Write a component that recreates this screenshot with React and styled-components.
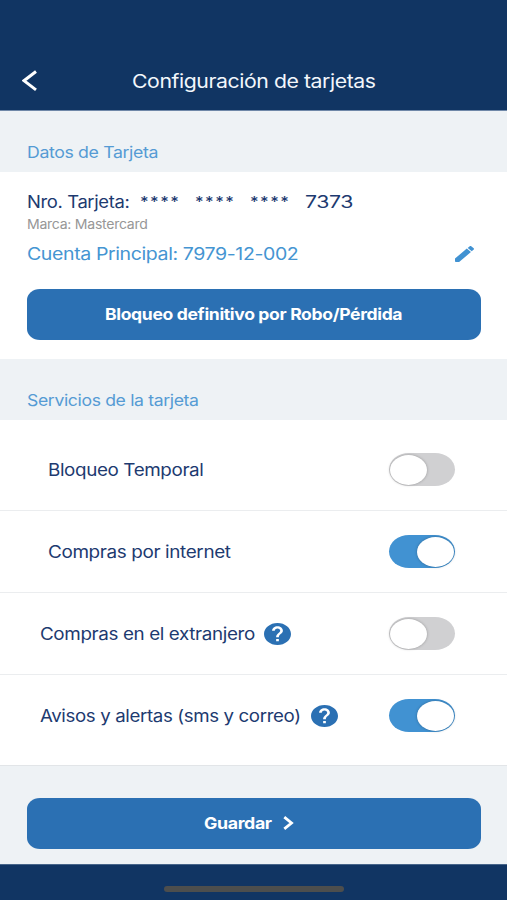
import React, { useState } from 'react';
import styled, { createGlobalStyle } from 'styled-components';

const GlobalStyle = createGlobalStyle`
  * {
    box-sizing: border-box;
  }
  body {
    margin: 0;
    background-color: #ffffff;
    font-family: Inter, 'Liberation Sans', sans-serif;
  }
`;

const Screen = styled.div`
  display: flex;
  flex-direction: column;
  height: 900px;
  background-color: #ffffff;
`;

// text is drawn a bit wide, $width is the room it takes in its row
const Label = styled.span`
  display: block;
  flex: none;
  width: ${(p) => (p.$width ? `${p.$width}px` : 'auto')};
  color: ${(p) => p.$color || '#1d3a70'};
  font-size: ${(p) => p.$size || 17}px;
  font-weight: ${(p) => p.$weight || 400};
  line-height: 20px;
  letter-spacing: ${(p) => p.$spacing || '-0.02em'};
  white-space: nowrap;
  transform: scaleX(${(p) => p.$stretch || 1.11});
  transform-origin: left center;
`;

const Header = styled.header`
  flex: none;
  display: flex;
  align-items: center;
  height: 111px;
  padding: 52px 22px 0;
  background-color: #113563;
  border-bottom: 1px solid #6f88a8;
`;
const BackButton = styled.button`
  display: flex;
  width: 110px;
  padding: 0;
  border: 0;
  background: none;
  cursor: pointer;
`;

const SectionTitle = styled.div`
  flex: none;
  height: 61px;
  padding: 31px 26.5px 0;
  background-color: #eef2f5;
`;

const CardInfo = styled.section`
  flex: none;
  height: 187px;
  padding: 20px 26px 0 27px;
`;
const CardNumber = styled.div`
  display: flex;
  height: 20px;
`;
const Brand = styled.div`
  display: flex;
  height: 32px;
  padding-top: 2px;
`;
const Account = styled.div`
  display: flex;
  align-items: center;
  justify-content: space-between;
  height: 20px;
  margin: 0 7.5px 25px 0;
`;

const Button = styled.button`
  display: flex;
  align-items: center;
  width: 100%;
  height: 51px;
  padding: 0 0 1px ${(p) => p.$indent}px;
  border: 0;
  border-radius: 13px / 11px;
  background-color: #2b70b3;
  font-family: inherit;
  text-align: left;
  cursor: pointer;
`;

const Services = styled.section`
  flex: none;
  height: 346px;
  padding-top: 9px;
  border-bottom: 1px solid #e2e5e8;
`;
const Row = styled.div`
  display: flex;
  align-items: center;
  height: 82px;
  padding: 0 52px 0 ${(p) => (p.$help ? 39.5 : 47.5)}px;
  border-bottom: 1px solid ${(p) => (p.$last ? 'transparent' : '#ebedef')};
`;
const Toggle = styled.button`
  flex: none;
  display: flex;
  align-items: center;
  justify-content: ${(p) => (p.$on ? 'flex-end' : 'flex-start')};
  width: 66px;
  height: 33px;
  margin-left: auto;
  padding: 0 1px;
  border: 0;
  border-radius: 20px / 16.5px;
  background-color: ${(p) => (p.$on ? '#4192d2' : '#d0d0d2')};
  cursor: pointer;
`;
const Knob = styled.span`
  width: 37px;
  height: 30px;
  border-radius: 50%;
  background-color: #ffffff;
  box-shadow: 0 0 3px rgba(0, 0, 0, 0.28);
`;

const Footer = styled.footer`
  flex: none;
  height: 98px;
  padding: 32px 26px 0 27px;
  background-color: #eef2f5;
`;
const BottomBar = styled.div`
  flex: 1;
  display: flex;
  justify-content: center;
  padding-top: 21px;
  background-color: #113563;
  border-top: 1px solid #47658a;
`;
const HomeIndicator = styled.div`
  width: 180px;
  height: 6px;
  margin-left: 1px;
  border-radius: 3px;
  background-color: #4d4e4d;
`;

const HelpIcon = () => (
  <svg width="27" height="22" viewBox="2 2 20 20" preserveAspectRatio="none" fill="#2b70b3">
    <path d="M12 2C6.48 2 2 6.48 2 12s4.48 10 10 10 10-4.48 10-10S17.52 2 12 2zm1 16.500h-2v-2h2v2zm2.070-7.250l-.9.92C13.450 12.900 13 13.500 13 15h-2v-.5c0-1.100.45-2.100 1.170-2.830l1.240-1.260c.37-.36.59-.86.59-1.410 0-1.100-.9-2-2-2s-2 .9-2 2H8c0-2.210 1.790-4 4-4s4 1.790 4 4c0 .88-.36 1.680-.93 2.250z" />
  </svg>
);

const PencilIcon = () => (
  <svg width="19" height="16" viewBox="3 3 18 18" preserveAspectRatio="none" fill="#4192d2">
    <path d="M3 17.100V20.200q0 .8.8.8H6.900L18.100 9.800l-3.900-3.900L3 17.100zM20.710 7.040a1 1 0 0 0 0-1.410l-2.340-2.340a1 1 0 0 0-1.410 0l-1.930 1.830 3.850 3.850 1.830-1.930z" />
  </svg>
);

const services = [
  { name: 'Bloqueo Temporal', on: false, stretch: 1.107 },
  { name: 'Compras por internet', on: true, stretch: 1.112 },
  { name: 'Compras en el extranjero', on: false, stretch: 1.107, help: true, width: 224.5 },
  { name: 'Avisos y alertas (sms y correo)', on: true, stretch: 1.099, help: true, width: 271.5 },
];

const maskedGroups = [0, 1, 2];

const App = () => {
  const [active, setActive] = useState(services.map((s) => s.on));
  const toggle = (index) => setActive(active.map((on, i) => (i === index ? !on : on)));

  return (
    <>
      <GlobalStyle />
      <Screen>
        <Header>
          <BackButton aria-label="Volver">
            <svg width="16" height="22" viewBox="0 0 16 22" fill="none" stroke="#fff" strokeWidth="3">
              <path d="M14 1.500L2 10.700l12 9.200" />
            </svg>
          </BackButton>
          <Label $size={18.5} $color="#f3f7fc" $stretch={1.148}>Configuración de tarjetas</Label>
        </Header>

        <SectionTitle>
          <Label $size={16} $color="#559bd4" $stretch={1.105}>Datos de Tarjeta</Label>
        </SectionTitle>
        <CardInfo>
          <CardNumber>
            <Label $width={113} $stretch={1.084}>Nro. Tarjeta:</Label>
            {maskedGroups.map((group) => (
              <Label key={group} $width={55} $size={14.5} $weight={500} $spacing="0.09em" $stretch={1.14}>
                ****
              </Label>
            ))}
            <Label $stretch={1.25}>7373</Label>
          </CardNumber>
          <Brand>
            <Label $size={13} $color="#979797" $stretch={1.083}>Marca: Mastercard</Label>
          </Brand>
          <Account>
            <Label $color="#4595d2" $stretch={1.148}>Cuenta Principal: 7979-12-002</Label>
            <PencilIcon />
          </Account>
          <Button $indent={78}>
            <Label $size={16} $weight={700} $color="#fff" $stretch={1.098}>
              Bloqueo definitivo por Robo/Pérdida
            </Label>
          </Button>
        </CardInfo>

        <SectionTitle>
          <Label $size={16} $color="#559bd4" $stretch={1.1}>Servicios de la tarjeta</Label>
        </SectionTitle>
        <Services>
          {services.map((s, i) => (
            <Row key={s.name} $help={s.help} $last={i === services.length - 1}>
              <Label $width={s.width} $stretch={s.stretch}>{s.name}</Label>
              {s.help && <HelpIcon />}
              <Toggle role="switch" aria-checked={active[i]} $on={active[i]} onClick={() => toggle(i)}>
                <Knob />
              </Toggle>
            </Row>
          ))}
        </Services>

        <Footer>
          <Button $indent={177}>
            <Label $width={79} $size={16} $weight={700} $color="#fff">Guardar</Label>
            <svg width="11" height="14" viewBox="0 0 11 14" fill="none" stroke="#fff" strokeWidth="2.8">
              <path d="M1.300 1.200L8.500 7l-7.200 5.800" />
            </svg>
          </Button>
        </Footer>
        <BottomBar>
          <HomeIndicator />
        </BottomBar>
      </Screen>
    </>
  );
};

export default App;
